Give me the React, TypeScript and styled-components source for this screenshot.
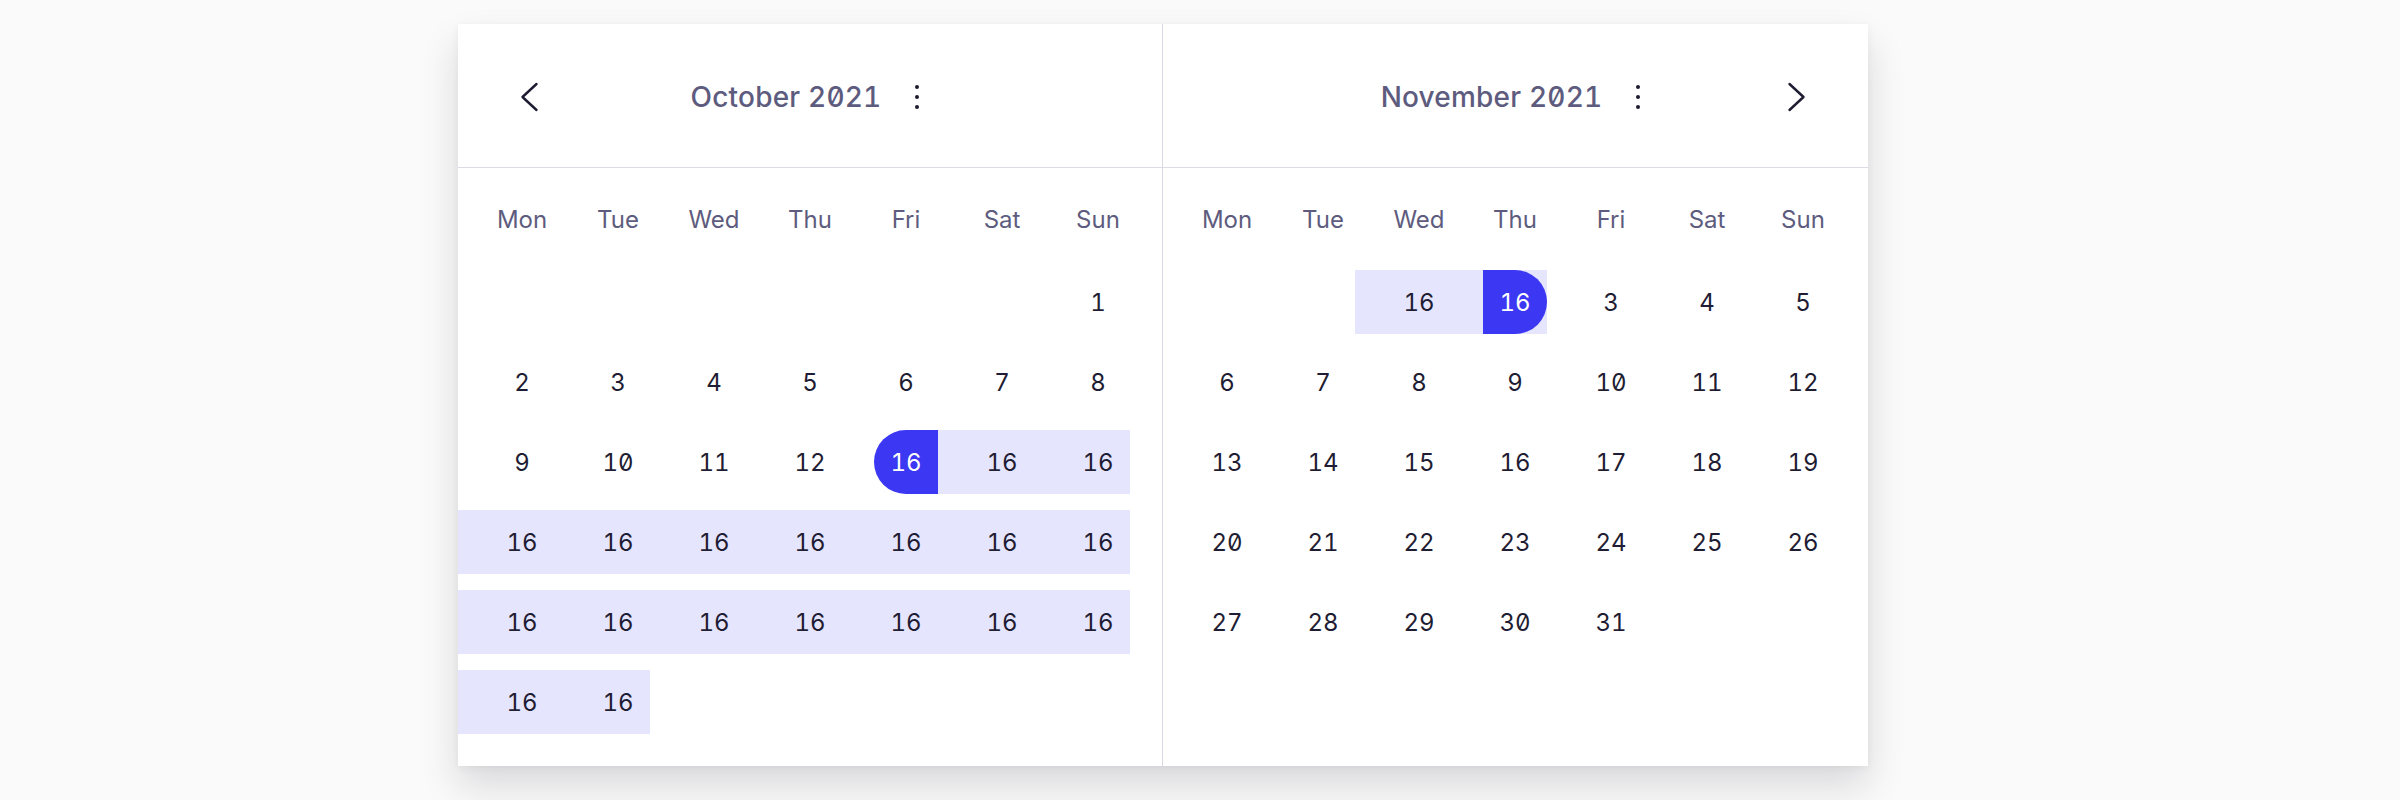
import React from 'react'
import styled, { createGlobalStyle, css } from 'styled-components'

const GlobalStyle = createGlobalStyle`
  * {
    box-sizing: border-box;
  }
  body {
    margin: 0;
    background: #fafafa;
    font-family: Inter, 'Noto Sans', sans-serif;
  }
`

const Page = styled.div`
  width: 100%;
  height: 800px;
  padding-top: 24px;
  padding-left: 458px;
`

const Card = styled.div`
  width: 1410px;
  display: flex;
  background: #ffffff;
  box-shadow: 0 20px 36px rgba(20, 20, 40, 0.14), 0 2px 8px rgba(20, 20, 40, 0.05);
`

const Month = styled.section<{ $divider?: boolean }>`
  width: 705px;
  padding-bottom: 32px;
  ${(p) =>
    p.$divider &&
    css`
      border-right: 1px solid #d9d8e5;
    `}
`

const Header = styled.header`
  height: 144px;
  border-bottom: 1px solid #dcdbe8;
  display: grid;
  grid-template-columns: 1fr auto 1fr;
  align-items: center;
  padding: 2px 48px 0;
`

const NavSlot = styled.div<{ $side: 'left' | 'right' }>`
  display: flex;
  justify-content: ${(p) => (p.$side === 'left' ? 'flex-start' : 'flex-end')};
`

const NavButton = styled.button`
  width: 48px;
  height: 48px;
  border: 0;
  padding: 0;
  background: transparent;
  display: flex;
  align-items: center;
  justify-content: center;
  cursor: pointer;
  color: #1d1c30;
`

const TitleGroup = styled.div`
  display: flex;
  align-items: center;
  gap: 24px;
`

const Title = styled.h2`
  margin: 0;
  font-size: 28px;
  font-weight: 500;
  color: #5e5c7e;
  font-feature-settings: 'zero' 1, 'tnum' 1;
  letter-spacing: 0.2px;
`

const MenuButton = styled.button`
  width: 24px;
  height: 32px;
  border: 0;
  padding: 0;
  background: transparent;
  display: flex;
  align-items: center;
  justify-content: center;
  color: #1d1c30;
`

const Body = styled.div`
  padding-top: 31px;
`

const Grid = styled.div`
  display: grid;
  grid-template-columns: repeat(7, 96px);
  row-gap: 16px;
`

const WeekDay = styled.div`
  height: 40px;
  margin-bottom: 15px;
  display: flex;
  justify-content: flex-end;
  align-items: center;
  font-size: 24px;
  color: #5e5c7e;
  span {
    width: 64px;
    text-align: center;
  }
`

type Edge = 'start' | 'end' | undefined

const Cell = styled.div<{ $range?: boolean }>`
  height: 64px;
  display: flex;
  justify-content: flex-end;
  background: ${(p) => (p.$range ? '#e6e5fe' : 'transparent')};
`

const Day = styled.div<{ $edge?: Edge }>`
  width: 64px;
  height: 64px;
  display: flex;
  align-items: center;
  justify-content: center;
  font-size: 24px;
  font-weight: 400;
  color: #1f1d33;
  font-feature-settings: 'zero' 1, 'tnum' 1;
  ${(p) =>
    p.$edge &&
    css`
      background: #3b37f2;
      color: #ffffff;
      border-radius: ${p.$edge === 'start' ? '32px 0 0 32px' : '0 32px 32px 0'};
    `}
`

const ChevronLeft = () => (
  <svg width="32" height="32" viewBox="0 0 32 32" fill="none">
    <polyline
      points="22.5,3 8.5,16 22.5,29"
      stroke="currentColor"
      strokeWidth="2.4"
      strokeLinecap="round"
      strokeLinejoin="round"
    />
  </svg>
)

const ChevronRight = () => (
  <svg width="32" height="32" viewBox="0 0 32 32" fill="none">
    <polyline
      points="9.5,3 23.5,16 9.5,29"
      stroke="currentColor"
      strokeWidth="2.4"
      strokeLinecap="round"
      strokeLinejoin="round"
    />
  </svg>
)

const Kebab = () => (
  <svg width="24" height="32" viewBox="0 0 24 32" fill="currentColor">
    <circle cx="12" cy="6" r="2" />
    <circle cx="12" cy="16" r="2" />
    <circle cx="12" cy="26" r="2" />
  </svg>
)

type DayData = { label?: string; range?: boolean; edge?: Edge }

const weekDays = ['Mon', 'Tue', 'Wed', 'Thu', 'Fri', 'Sat', 'Sun']

const blank: DayData = {}
const d = (n: number): DayData => ({ label: String(n) })
const r: DayData = { label: '16', range: true }

const october: DayData[] = [
  blank, blank, blank, blank, blank, blank, d(1),
  d(2), d(3), d(4), d(5), d(6), d(7), d(8),
  d(9), d(10), d(11), d(12), { label: '16', edge: 'start' }, r, r,
  r, r, r, r, r, r, r,
  r, r, r, r, r, r, r,
  r, r,
]

const november: DayData[] = [
  blank, blank, r, { label: '16', range: true, edge: 'end' }, d(3), d(4), d(5),
  ...Array.from({ length: 26 }, (_, i) => d(i + 6)),
]

type MonthProps = {
  title: string
  days: DayData[]
  nav: 'left' | 'right'
  divider?: boolean
}

const MonthView: React.FC<MonthProps> = ({ title, days, nav, divider }) => (
  <Month $divider={divider}>
    <Header>
      <NavSlot $side="left">
        {nav === 'left' && (
          <NavButton aria-label="Previous month">
            <ChevronLeft />
          </NavButton>
        )}
      </NavSlot>
      <TitleGroup>
        <Title>{title}</Title>
        <MenuButton aria-label="Options">
          <Kebab />
        </MenuButton>
      </TitleGroup>
      <NavSlot $side="right">
        {nav === 'right' && (
          <NavButton aria-label="Next month">
            <ChevronRight />
          </NavButton>
        )}
      </NavSlot>
    </Header>
    <Body>
      <Grid>
        {weekDays.map((w) => (
          <WeekDay key={w}>
            <span>{w}</span>
          </WeekDay>
        ))}
        {days.map((day, i) => (
          <Cell key={i} $range={day.range}>
            {day.label && <Day $edge={day.edge}>{day.label}</Day>}
          </Cell>
        ))}
      </Grid>
    </Body>
  </Month>
)

const App: React.FC = () => (
  <>
    <GlobalStyle />
    <Page>
      <Card>
        <MonthView title="October 2021" days={october} nav="left" divider />
        <MonthView title="November 2021" days={november} nav="right" />
      </Card>
    </Page>
  </>
)

export default App
